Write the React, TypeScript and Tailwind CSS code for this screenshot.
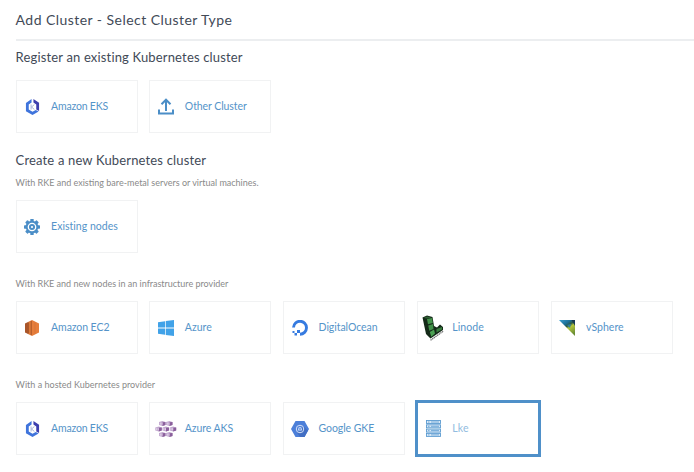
import type { ReactNode } from "react";

function EksIcon() {
  return (
    <svg width="15" height="16" viewBox="0 0 32 32" preserveAspectRatio="none">
      <path d="M14 0 L14 7 L8 11 L8 21 L16 25.500 L23 22 L29 25 L16 32 L2 24.500 L2 8 Z" fill="#3f74dc" />
      <path d="M18 0 L30 7.500 L30 24 L24 21 L24 11 L18 7 Z" fill="#3d3fae" />
      <path d="M13 11 V21 M20 11 L14 16 L20 21" stroke="#8d9fd0" strokeWidth="1.600" fill="none" />
    </svg>
  );
}

function UploadIcon() {
  return (
    <svg width="16" height="17" viewBox="0 0 16 17" fill="none" stroke="#4b8ec7" strokeWidth="2">
      <path d="M8 13 V2 M3.500 6.200 L8 1.700 L12.500 6.200" />
      <path d="M1 11.500 V15.500 H15 V11.500" />
    </svg>
  );
}

function GearIcon() {
  return (
    <svg width="16" height="16" viewBox="0 0 16 16">
      <g fill="#4b8ec7">
        <rect x="6.300" y="0" width="3.400" height="16" rx="0.600" />
        <rect x="6.300" y="0" width="3.400" height="16" rx="0.600" transform="rotate(45 8 8)" />
        <rect x="6.300" y="0" width="3.400" height="16" rx="0.600" transform="rotate(90 8 8)" />
        <rect x="6.300" y="0" width="3.400" height="16" rx="0.600" transform="rotate(135 8 8)" />
        <circle cx="8" cy="8" r="6.300" />
      </g>
      <circle cx="8" cy="8" r="3.700" fill="none" stroke="#fff" strokeWidth="1.300" />
      <circle cx="8" cy="8" r="1.100" fill="#fff" />
    </svg>
  );
}

function Ec2Icon() {
  return (
    <svg width="14" height="16" viewBox="0 0 28 32">
      <path d="M0 7 L6 4 V28 L0 25 Z" fill="#a9562a" />
      <path d="M6 4 L14 0 V32 L6 28 Z" fill="#dc7a3a" />
      <path d="M14 0 L28 7 V25 L14 32 Z" fill="#e67e3c" />
      <path d="M7 5 V27 M12.500 2 V30" stroke="#9c4e24" strokeWidth="1.500" />
      <path d="M20 5 V27" stroke="#d07136" strokeWidth="1.200" />
    </svg>
  );
}

function WindowsIcon() {
  return (
    <svg width="16" height="16" viewBox="0 0 34 32" preserveAspectRatio="none" fill="#41a2e8">
      <path d="M0 4.500 L15 2.300 V15 H0 Z M16.500 2 L34 0 V15 H16.500 Z M0 16.800 H15 V29.700 L0 27.500 Z M16.500 16.800 H34 V32 L16.500 30 Z" />
    </svg>
  );
}

function OceanIcon() {
  return (
    <svg width="16" height="16" viewBox="0 0 32 32">
      <path d="M3 15 A13 13 0 1 1 16 28.500" fill="none" stroke="#367be0" strokeWidth="5.800" />
      <path d="M10 20 H16 V26 H10 Z M5 26 H10 V31 H5 Z M1 22 H5 V26 H1 Z" fill="#367be0" />
    </svg>
  );
}

function LinodeIcon() {
  return (
    <svg width="22" height="26" viewBox="0 0 22 26">
      <path d="M0.500 2.500 L5 0.500 L10.500 2 L12 11 L15 12.500 L18 9.500 L21 12 V15 L8.500 23.500 L4 19 Z" fill="#142a18" />
      <path d="M5 4 L10 3 L10.800 8 L6 9.300 Z" fill="#44934b" />
      <path d="M6.300 10.500 L11 9 L11.500 14 L7.300 15.800 Z" fill="#409148" />
      <path d="M7.800 17 L12 14.500 L13 18.500 L9.300 21.800 Z" fill="#4ba153" />
      <path d="M14.500 14 L20 12 V14.500 L14.500 17.500 Z" fill="#397e3f" />
      <path d="M1.500 3 L5 1.500 L9.500 2.500 L5 3.500 Z" fill="#2f6135" />
      <path d="M8.500 25.300 L21.500 16" stroke="#777" strokeWidth="1.300" strokeDasharray="1.500 0.500" />
    </svg>
  );
}

function VsphereIcon() {
  return (
    <svg width="16" height="16" viewBox="0 0 16 16">
      <defs>
        <linearGradient id="vs" x1="0" y1="0" x2="0.700" y2="1">
          <stop offset="0" stopColor="#3aa0d0" />
          <stop offset="0.350" stopColor="#1c6f98" />
          <stop offset="0.500" stopColor="#2b5a48" />
          <stop offset="0.620" stopColor="#b5c63c" />
          <stop offset="1" stopColor="#6b8e35" />
        </linearGradient>
      </defs>
      <path d="M0 0 H16 V16 Z" fill="url(#vs)" />
      <path d="M12.500 0 H16 V6 Z" fill="#173a55" />
      <path d="M8 5 L12 4 L11 8 Z" fill="#2f7fa0" />
    </svg>
  );
}

const PODS = [
  [4, 0], [11, 0],
  [0.300, 5.500], [7.500, 5.500], [14.700, 5.500],
  [4, 11], [11, 11],
];

function AksIcon() {
  return (
    <svg width="22" height="16" viewBox="0 0 22 16">
      {PODS.map(([x, y]) => (
        <g key={`${x}-${y}`} transform={`translate(${x} ${y})`}>
          <path d="M0 1 L3.500 0 L6.500 1 V4 L3.500 5 L0 4 Z" fill="#c2a8d0" />
          <path d="M3.500 1.200 L6.500 1 V4 L3.500 5 Z" fill="#8a5f9b" />
          <path d="M1.300 1.700 V3.700 M3 1.700 V3.700" stroke="#ece2f1" strokeWidth="0.700" />
        </g>
      ))}
    </svg>
  );
}

function GkeIcon() {
  return (
    <svg width="18" height="16" viewBox="0 0 36 32">
      <path d="M9 0 H27 L36 16 L27 32 H9 L0 16 Z" fill="#4c7fd9" />
      <path d="M24 10 L34 19 L27 32 H18 L12 23 Z" fill="#426fc4" />
      <circle cx="18" cy="16" r="7.500" fill="none" stroke="#d5e1f8" strokeWidth="2" />
      <path d="M18 11.500 L22 14 V18.500 L18 20.500 L14 18.500 V14 Z" fill="#c3d5f5" />
      <path d="M18 16 V20 M18 16 L15 14.500 M18 16 L21 14.500" stroke="#4c7fd9" strokeWidth="1.500" />
    </svg>
  );
}

function ServerIcon() {
  return (
    <svg width="15" height="17" viewBox="0 0 15 17">
      {[0.500, 4.800, 9.100, 13.400].map((y) => (
        <g key={y}>
          <rect x="0.500" y={y} width="14" height="3" fill="#d9e9f7" stroke="#5b9bd0" strokeWidth="0.900" />
          <path d={`M2 ${y + 1.500} H3.500 M5 ${y + 1.500} H13`} stroke="#5b9bd0" strokeWidth="0.800" />
        </g>
      ))}
    </svg>
  );
}

type CardProps = { icon: ReactNode; label: string; tracking: string; selected?: boolean };

function Card({ icon, label, tracking, selected = false }: CardProps) {
  return (
    <div
      className={`flex h-[53px] w-[122px] shrink-0 items-center border ${
        selected ? "border-[#4f90c9] ring-2 ring-[#4f90c9]" : "border-[#f1f2f3]"
      }`}
    >
      <div className="flex w-[31px] shrink-0 items-center justify-center">{icon}</div>
      <span
        className={`ml-[3.5px] pb-0.5 text-[10.5px] leading-4 whitespace-nowrap ${tracking} ${
          selected ? "text-[#92bce0]" : "text-[#5594c9]"
        }`}
      >
        {label}
      </span>
    </div>
  );
}

function Cards({ children }: { children: ReactNode }) {
  return <div className="flex gap-[11.75px]">{children}</div>;
}

export default function App() {
  return (
    <main className="h-[472px] w-[694px] overflow-hidden bg-white pl-[15.6px] font-['Lato',sans-serif] text-[#424a57]">
      <header className="h-[41px] border-b-2 border-[#eceef0] pt-[10px]">
        <h1 className="text-[14px] leading-5 whitespace-nowrap tracking-[0.45px]">
          Add Cluster - Select Cluster Type
        </h1>
      </header>
      <section>
        <h2 className="h-[39px] pt-[6px] text-[13px] leading-5 whitespace-nowrap tracking-[0.16px]">
          Register an existing Kubernetes cluster
        </h2>
        <Cards>
          <Card icon={<EksIcon />} label="Amazon EKS" tracking="tracking-[-0.2px]" />
          <Card icon={<UploadIcon />} label="Other Cluster" tracking="tracking-[-0.08px]" />
        </Cards>
      </section>
      <section className="pt-[17px]">
        <h2 className="text-[13px] leading-5 whitespace-nowrap tracking-[0.16px]">Create a new Kubernetes cluster</h2>
        <p className="mt-[5px] mb-[9px] text-[9px] leading-4 whitespace-nowrap tracking-[0px] text-[#8a8a8a]">
          With RKE and existing bare-metal servers or virtual machines.
        </p>
        <Cards>
          <Card icon={<GearIcon />} label="Existing nodes" tracking="tracking-[0.02px]" />
        </Cards>
      </section>
      <section className="pt-[23px]">
        <p className="mb-[9px] text-[9px] leading-4 whitespace-nowrap tracking-[-0.01px] text-[#8a8a8a]">
          With RKE and new nodes in an infrastructure provider
        </p>
        <Cards>
          <Card icon={<Ec2Icon />} label="Amazon EC2" tracking="tracking-[-0.08px]" />
          <Card icon={<WindowsIcon />} label="Azure" tracking="tracking-[0.02px]" />
          <Card icon={<OceanIcon />} label="DigitalOcean" tracking="tracking-[-0.06px]" />
          <Card icon={<LinodeIcon />} label="Linode" tracking="tracking-[0.05px]" />
          <Card icon={<VsphereIcon />} label="vSphere" tracking="tracking-[0.02px]" />
        </Cards>
      </section>
      <section className="pt-[23px]">
        <p className="mb-[9px] text-[9px] leading-4 whitespace-nowrap tracking-[0.02px] text-[#8a8a8a]">
          With a hosted Kubernetes provider
        </p>
        <Cards>
          <Card icon={<EksIcon />} label="Amazon EKS" tracking="tracking-[-0.2px]" />
          <Card icon={<AksIcon />} label="Azure AKS" tracking="tracking-[-0.08px]" />
          <Card icon={<GkeIcon />} label="Google GKE" tracking="tracking-[-0.08px]" />
          <Card icon={<ServerIcon />} label="Lke" tracking="tracking-[0.1px]" selected />
        </Cards>
      </section>
    </main>
  );
}
